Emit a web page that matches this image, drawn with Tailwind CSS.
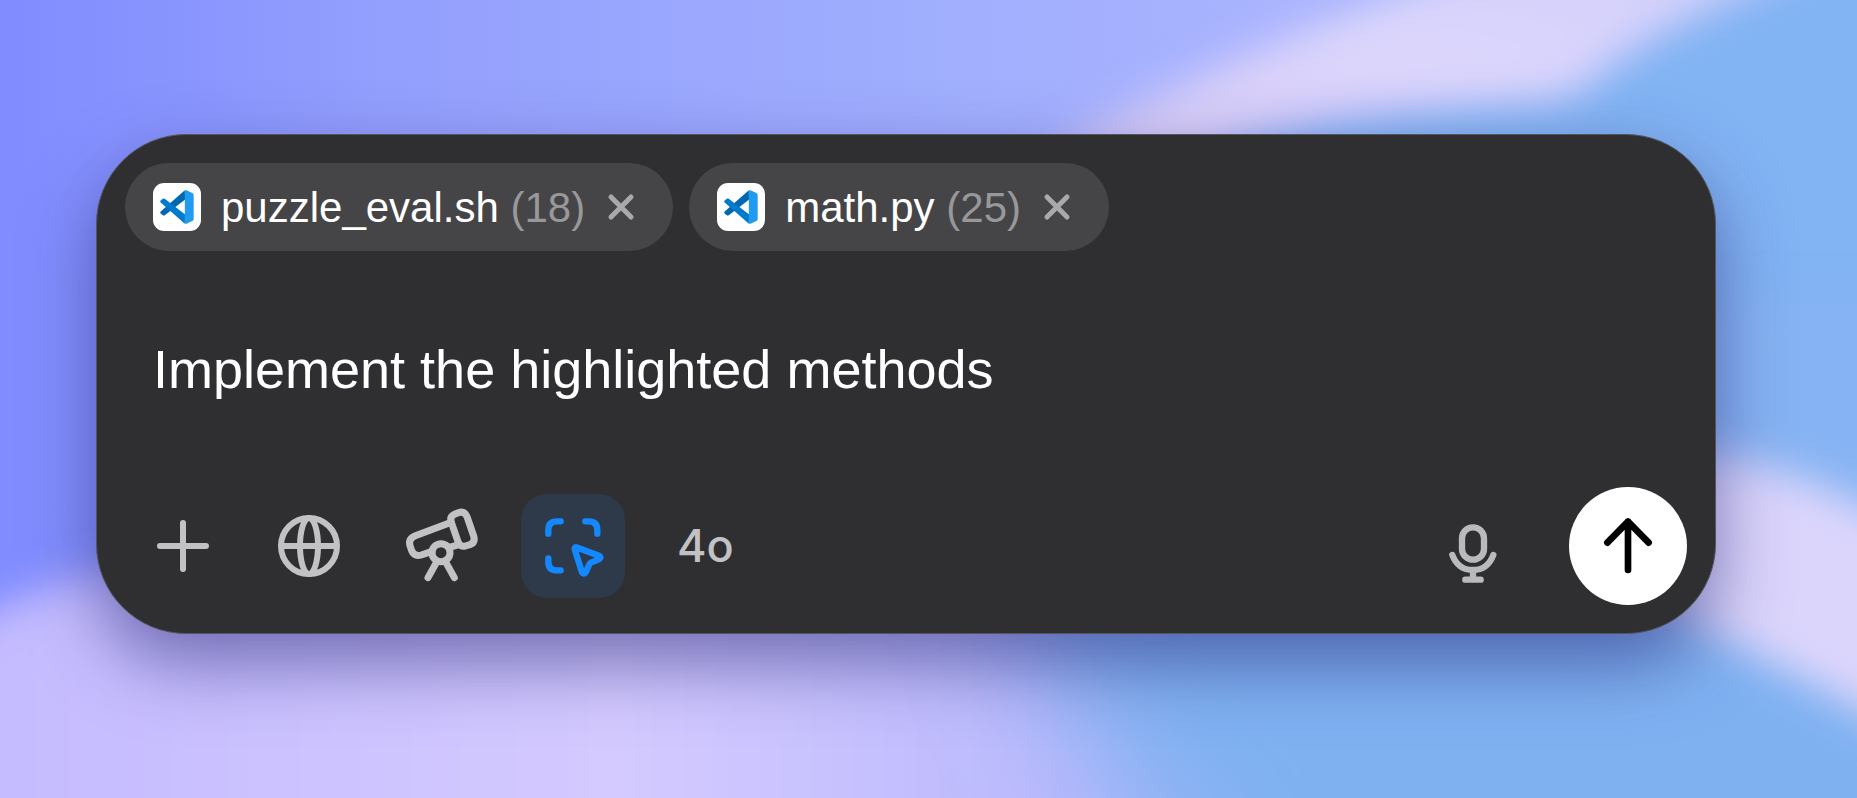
<!DOCTYPE html>
<html lang="en">
<head>
  <meta charset="UTF-8" />
  <meta name="viewport" content="width=device-width, initial-scale=1.0"/>
  <title>Chat bar</title>
  <script src="https://cdn.jsdelivr.net/npm/@tailwindcss/browser@4"></script>
</head>
<body class="relative min-h-screen overflow-hidden bg-[#8f9ffb] font-['Liberation_Sans',sans-serif]">

  <!-- wallpaper -->
  <svg class="absolute inset-0 w-full h-full" viewBox="0 0 1857 798" preserveAspectRatio="none" aria-hidden="true">
    <defs>
      <linearGradient id="base" x1="0" y1="0" x2="1" y2="0">
        <stop offset="0" stop-color="#808cff"/>
        <stop offset=".2" stop-color="#939ffd"/>
        <stop offset=".5" stop-color="#a0aefe"/>
        <stop offset=".7" stop-color="#aab4fe"/>
        <stop offset="1" stop-color="#86b4f4"/>
      </linearGradient>
      <linearGradient id="band" x1="0" y1="1" x2="1" y2="0">
        <stop offset="0" stop-color="#d6c8f4"/>
        <stop offset=".5" stop-color="#dcd6fc"/>
        <stop offset="1" stop-color="#d0cefb"/>
      </linearGradient>
      <linearGradient id="floor" x1="0" y1="0" x2="1" y2="0">
        <stop offset="0" stop-color="#c3baff"/>
        <stop offset=".5" stop-color="#d4caff"/>
        <stop offset=".8" stop-color="#bcbafd"/>
        <stop offset="1" stop-color="#a4b4fa"/>
      </linearGradient>
      <filter id="soft" x="-20%" y="-20%" width="140%" height="140%"><feGaussianBlur stdDeviation="20"/></filter>
      <filter id="softer" x="-40%" y="-60%" width="180%" height="220%"><feGaussianBlur stdDeviation="60"/></filter>
    </defs>
    <rect width="1857" height="798" fill="url(#base)"/>
    <path d="M1120 180 C1250 120 1420 90 1580 90 L1740 -60 H1960 V860 H1120z" fill="#82b3f3" filter="url(#soft)"/>
    <path d="M1040 160 C1140 100 1300 30 1480 -40 L1820 -40 C1680 20 1620 50 1580 90 C1520 116 1300 90 1180 170z" fill="url(#band)" filter="url(#soft)"/>
    <path d="M-60 640 C40 580 120 565 200 560 L1300 600 V900 H-60z" fill="url(#floor)" filter="url(#soft)"/>
    <path d="M1000 480 C1020 640 1080 760 1300 960 H2040 V480z" fill="#7fb1f1" filter="url(#softer)"/>
    <path d="M1640 300 H1960 V560 L1700 450z" fill="#86b3f3" filter="url(#soft)"/>
    <path d="M1640 444 C1750 449 1830 484 1940 544 V755 C1850 705 1780 665 1640 600z" fill="#dbd5fc" filter="url(#soft)"/>
  </svg>

  <main class="relative pt-[134px] pl-24 pr-[141px] pb-40">
    <form class="rounded-[90px] border border-[#55565c] bg-[#2f2f32] p-7 shadow-[0_30px_70px_rgba(40,40,120,0.55)]" onsubmit="return false">

      <!-- attached files -->
      <ul class="flex gap-4">
        <li class="flex h-22 items-center rounded-full bg-[#454547] pl-7 pr-9 text-[42px]">
          <svg class="size-12 shrink-0" viewBox="0 0 48 48" aria-hidden="true">
            <rect width="48" height="48" rx="11" fill="#fff"/>
            <g transform="translate(7 7) scale(.34)">
              <path d="M73 1 L2 63 q-3 3 0 6 L8 74 q3 2 6 0 L74 28z" fill="#0068b0"/>
              <path d="M73 99 L2 37 q-3 -3 0 -6 L8 26 q3 -2 6 0 L74 72z" fill="#007acc"/>
              <path d="M73 1 q2 -1 5 0 L95 9 q4 2 4 6 V85 q0 4 -4 6 L78 99 q-3 1 -5 0z" fill="#219bf0"/>
            </g>
          </svg>
          <span class="ml-5 whitespace-pre text-white">puzzle_eval.sh <span class="text-[#98989a]">(18)</span></span>
          <button type="button" aria-label="Remove puzzle_eval.sh" class="ml-5">
            <svg class="size-8" viewBox="0 0 32 32" fill="none" stroke="#a9a9ab" stroke-width="5" stroke-linecap="round"><path d="M6 6 26 26M26 6 6 26"/></svg>
          </button>
        </li>
        <li class="flex h-22 items-center rounded-full bg-[#454547] pl-7 pr-9 text-[42px]">
          <svg class="size-12 shrink-0" viewBox="0 0 48 48" aria-hidden="true">
            <rect width="48" height="48" rx="11" fill="#fff"/>
            <g transform="translate(7 7) scale(.34)">
              <path d="M73 1 L2 63 q-3 3 0 6 L8 74 q3 2 6 0 L74 28z" fill="#0068b0"/>
              <path d="M73 99 L2 37 q-3 -3 0 -6 L8 26 q3 -2 6 0 L74 72z" fill="#007acc"/>
              <path d="M73 1 q2 -1 5 0 L95 9 q4 2 4 6 V85 q0 4 -4 6 L78 99 q-3 1 -5 0z" fill="#219bf0"/>
            </g>
          </svg>
          <span class="ml-5 whitespace-pre text-white">math.py <span class="text-[#98989a]">(25)</span></span>
          <button type="button" aria-label="Remove math.py" class="ml-5">
            <svg class="size-8" viewBox="0 0 32 32" fill="none" stroke="#a9a9ab" stroke-width="5" stroke-linecap="round"><path d="M6 6 26 26M26 6 6 26"/></svg>
          </button>
        </li>
      </ul>

      <input type="text" aria-label="Message" value="Implement the highlighted methods"
        class="mt-20 mb-20 block h-19 w-full px-7 text-[54px] text-white outline-none" />

      <!-- toolbar -->
      <div class="flex items-center justify-between">
        <div class="flex items-center gap-6 pl-2">
          <button type="button" aria-label="Add" class="flex h-26 w-25 items-center justify-center">
            <svg class="size-13" viewBox="0 0 52 52" fill="none" stroke="#c2c2c4" stroke-width="6" stroke-linecap="round"><path d="M26 3V49M3 26H49"/></svg>
          </button>
          <button type="button" aria-label="Search the web" class="flex size-26 items-center justify-center">
            <svg class="size-16" viewBox="0 0 64 64" fill="none" stroke="#c2c2c4" stroke-width="6"><circle cx="32" cy="32" r="28"/><ellipse cx="32" cy="32" rx="9" ry="28"/><path d="M4 32H60"/></svg>
          </button>
          <button type="button" aria-label="Deep research" class="flex h-26 w-28 items-center justify-center">
            <svg class="size-25" viewBox="3 18 300 300" fill="none" stroke="#c2c2c4" stroke-width="21" stroke-linecap="round" stroke-linejoin="round">
              <path d="M184 97 L76 137 Q54 146 60 167 L65 182 Q73 201 94 195 L126 184"/>
              <path d="M184 97 Q178 80 193 73 L205 68 Q223 61 231 80 L251 138 Q257 158 240 164 L226 168 Q210 172 204 155 Z"/>
              <path d="M207 164 L178 172"/>
              <circle cx="153" cy="188" r="27"/>
              <path d="M139 218 L114 263M168 218 L193 263"/>
            </svg>
          </button>
          <button type="button" aria-label="Work with selection" aria-pressed="true" class="flex size-26 items-center justify-center rounded-[26px] bg-[#2e3949]">
            <svg class="size-25" viewBox="43 48 300 300" fill="none" stroke="#1488ff" stroke-width="19" stroke-linecap="round" stroke-linejoin="round">
              <path d="M119 161V150Q119 124 145 124H156M230 124H240Q266 124 266 150V161M119 235V245Q119 271 145 271H156"/>
              <path d="M203 202 L271 227 Q280 233 271 238 L248 247 Q243 249 241 255 L231 277 Q225 285 220 277 L198 208 Q197 201 203 202 Z"/>
            </svg>
          </button>
          <button type="button" class="px-7 font-['Inter'] text-[45px] font-medium text-[#c2c2c4]">4o</button>
        </div>
        <div class="flex items-center gap-11">
          <button type="button" aria-label="Dictate" class="flex size-26 items-center justify-center">
            <svg class="size-25" viewBox="11 78 300 300" fill="none" stroke="#b9babb" stroke-width="19" stroke-linecap="round">
              <rect x="128" y="172" width="66" height="97" rx="33"/>
              <path d="M99 255Q116 300 161 300Q205 300 222 255M161 300V328M138 329H184"/>
            </svg>
          </button>
          <button type="submit" aria-label="Send" class="flex size-[118px] items-center justify-center rounded-full bg-white">
            <svg class="size-25" viewBox="475 78 300 300" fill="none" stroke="#000" stroke-width="20" stroke-linecap="round" stroke-linejoin="round"><path d="M625 300V155M563 218 625 155 687 218"/></svg>
          </button>
        </div>
      </div>
    </form>
  </main>
</body>
</html>
